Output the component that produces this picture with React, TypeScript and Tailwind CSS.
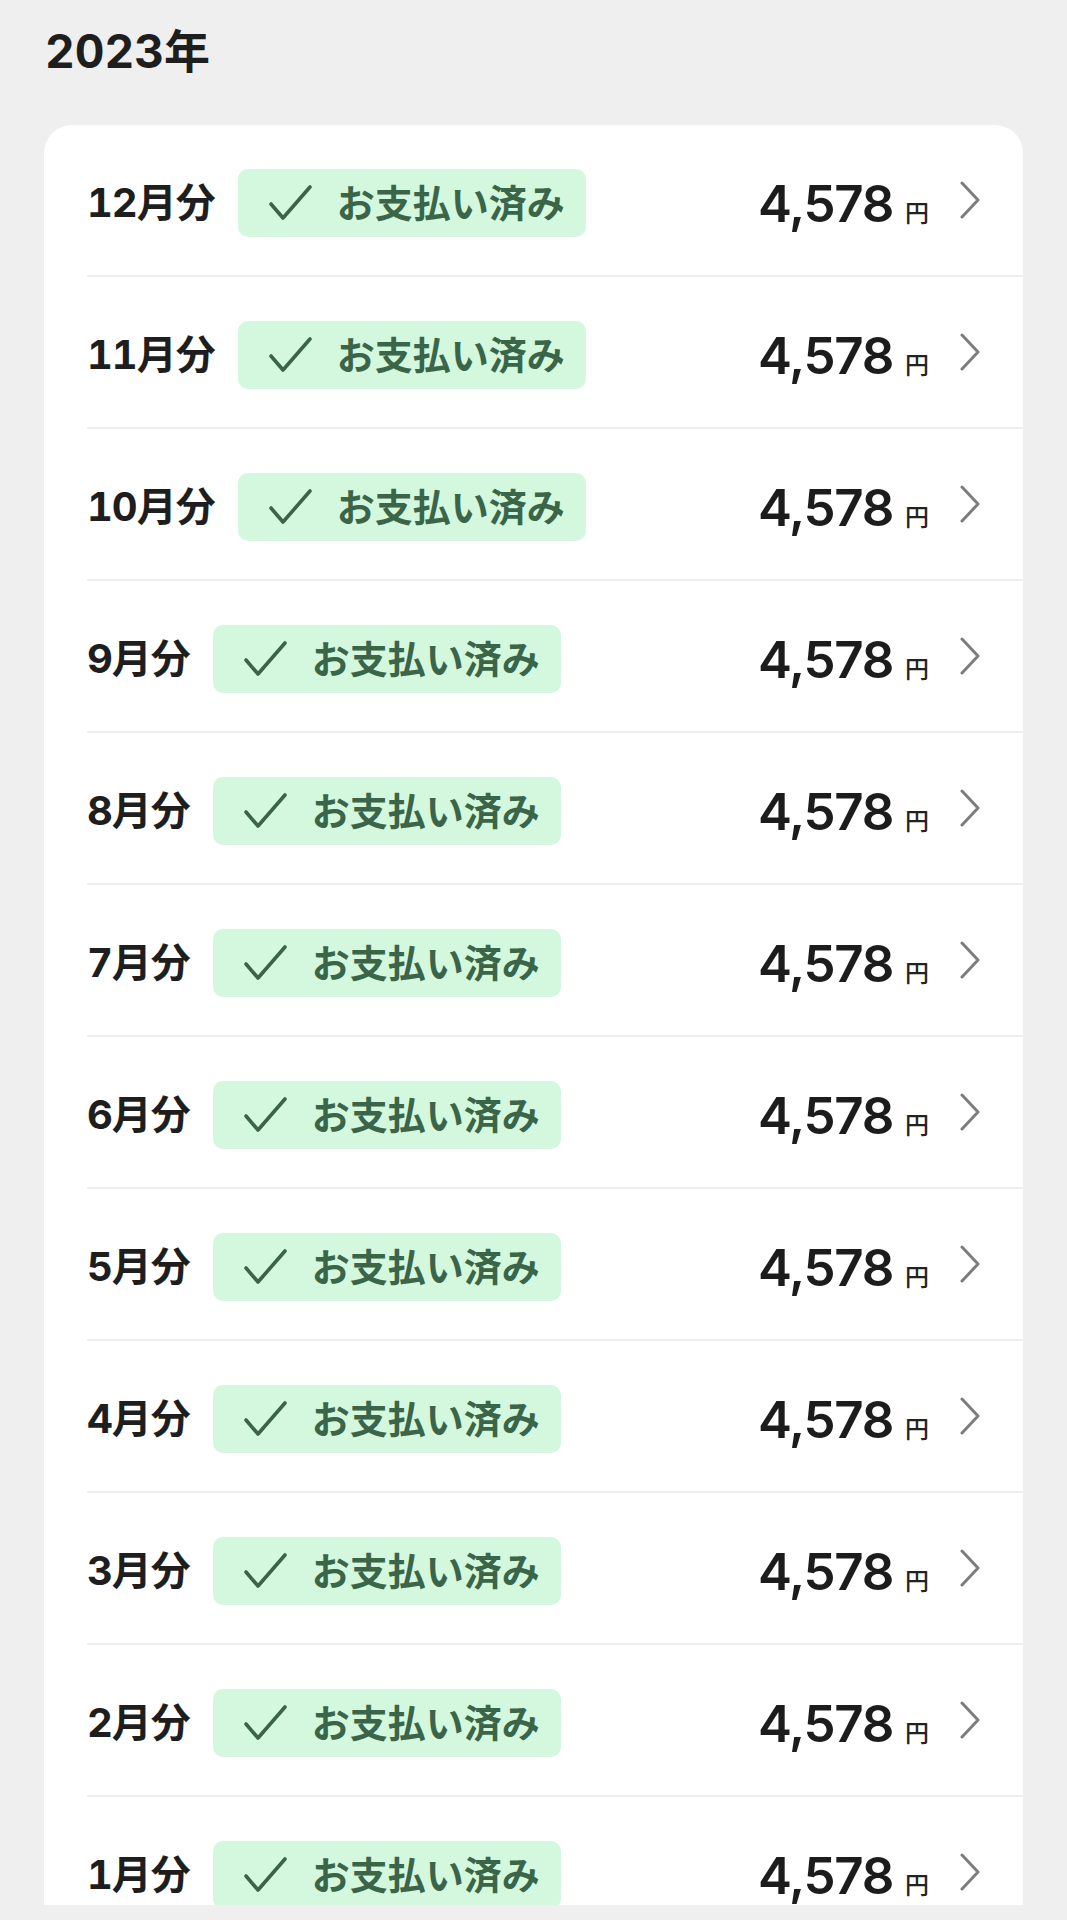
const MONTHS = [12, 11, 10, 9, 8, 7, 6, 5, 4, 3, 2, 1];

const FONT = { fontFamily: 'Inter, "Noto Sans CJK JP", sans-serif' };

function Check() {
  return (
    <svg width="43" height="36" viewBox="0 0 43 36" fill="none" className="shrink-0">
      <path d="M2 19 L14 33 L41 2" stroke="#3a6448" strokeWidth="3.6" strokeLinecap="round" strokeLinejoin="round" />
    </svg>
  );
}

function Chevron() {
  return (
    <svg width="22" height="38" viewBox="0 0 22 38" fill="none" className="shrink-0">
      <path d="M3 2 L19 19 L3 36" stroke="#7d7d7d" strokeWidth="3" strokeLinecap="round" strokeLinejoin="round" />
    </svg>
  );
}

function Row({ month }: { month: number }) {
  return (
    <div className="flex h-[152px] shrink-0 pl-[43px]">
      <div className="flex flex-1 items-center border-b-2 border-[#eeeeee] pr-[42px] pt-[6px]">
        <span className="text-[40px] font-bold leading-none tracking-tight tabular-nums text-[#1e1e1e]">{month}月分</span>
        <div className="ml-[23px] flex h-[68px] items-center rounded-[10px] bg-[#d3f8de] pl-[31px] pr-[21px]">
          <Check />
          <span className="ml-[25px] text-[38px] font-bold leading-none text-[#3b6549]">お支払い済み</span>
        </div>
        <div className="ml-auto flex items-baseline">
          <span className="text-[51px] font-semibold leading-none tracking-tight text-[#1c1c1c]">4,578</span>
          <span className="ml-[12px] text-[24px] font-medium leading-none text-[#222]">円</span>
        </div>
        <div className="ml-[30px] -mt-[6px]">
          <Chevron />
        </div>
      </div>
    </div>
  );
}

export default function App() {
  return (
    <div className="flex h-[1920px] w-full flex-col overflow-hidden bg-[#efefef]" style={FONT}>
      <div className="flex h-[1905px] flex-col overflow-hidden">
        <h1 className="pl-[45px] pt-[28px] text-[46px] font-bold leading-none tabular-nums text-[#1e1e1e]">2023年</h1>
        <div className="mx-[44px] mt-[51px] flex flex-col rounded-t-[28px] bg-white">
          {MONTHS.map((m) => (
            <Row key={m} month={m} />
          ))}
        </div>
      </div>
    </div>
  );
}
